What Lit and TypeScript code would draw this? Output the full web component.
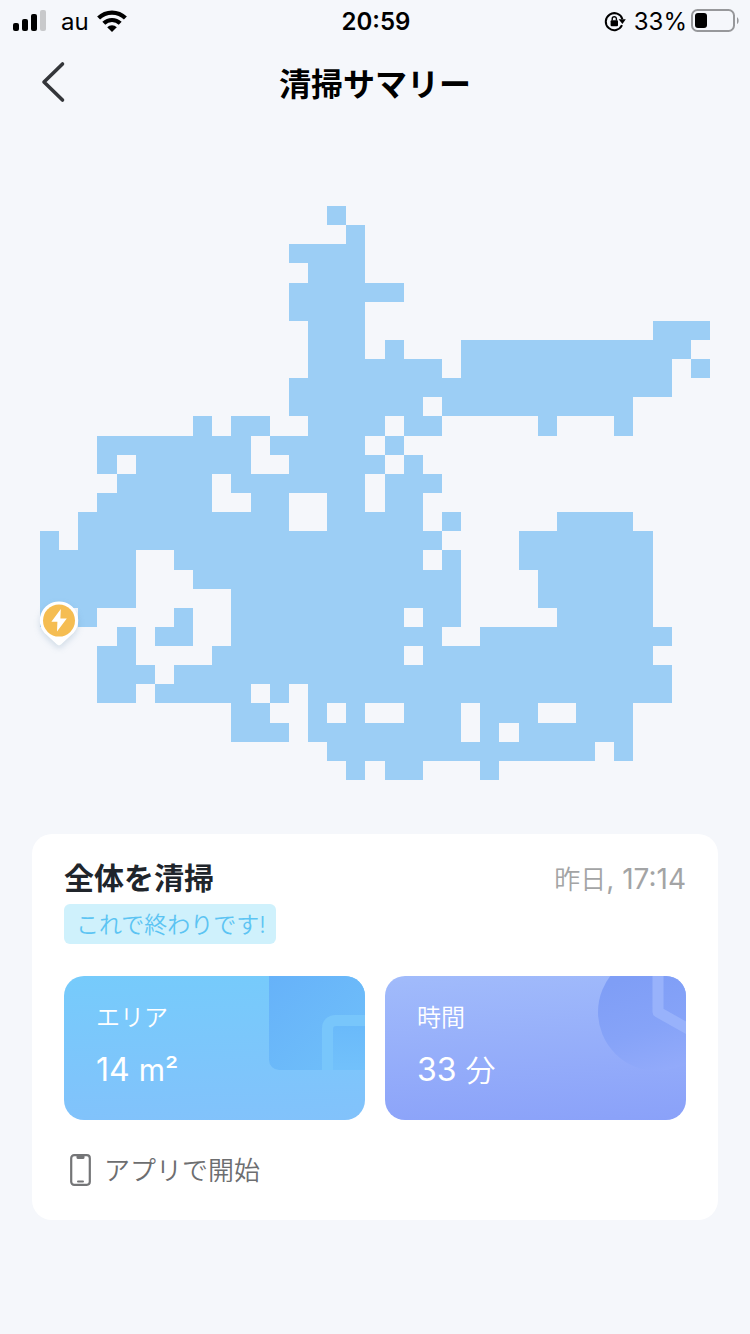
import { LitElement, html, css, svg } from "lit";
import { customElement, property } from "lit/decorators.js";

type Span = [number, number];

const COLS = 35;
const CELL_W = 670 / 35;
const CELL_H = 574 / 30;

/* Cleaned cells of each map row, as [first column, column after the last]. */
const CLEANED: Span[][] = [
  [[15, 16]],
  [[16, 17]],
  [[13, 17]],
  [[14, 17]],
  [[13, 19]],
  [[13, 17]],
  [[14, 17], [32, 35]],
  [[14, 17], [18, 19], [22, 34]],
  [[14, 21], [22, 33], [34, 35]],
  [[13, 33]],
  [[13, 20], [21, 31]],
  [[8, 9], [10, 12], [14, 18], [19, 21], [26, 27], [30, 31]],
  [[3, 11], [12, 17], [18, 19]],
  [[3, 4], [5, 11], [13, 18], [19, 20]],
  [[4, 9], [10, 17], [18, 21]],
  [[3, 9], [11, 13], [15, 17], [18, 20]],
  [[2, 13], [15, 20], [21, 22], [27, 31]],
  [[0, 1], [2, 21], [25, 32]],
  [[0, 5], [7, 20], [21, 22], [25, 32]],
  [[0, 5], [8, 22], [26, 32]],
  [[0, 5], [10, 22], [26, 32]],
  [[0, 1], [2, 3], [7, 8], [10, 19], [20, 22], [27, 32]],
  [[4, 5], [6, 8], [10, 21], [23, 33]],
  [[3, 5], [9, 19], [20, 32]],
  [[3, 6], [7, 33]],
  [[3, 5], [6, 11], [12, 13], [14, 33]],
  [[10, 12], [14, 15], [16, 17], [19, 22], [23, 26], [28, 31]],
  [[10, 13], [14, 22], [23, 24], [25, 31]],
  [[15, 29], [30, 31]],
  [[16, 17], [18, 20], [23, 24]],
];

@customElement("status-bar")
export class StatusBar extends LitElement {
  static styles = css`
    :host {
      display: grid;
      grid-template-columns: 1fr auto 1fr;
      align-items: center;
      height: 40px;
      padding: 0 10px 0 12px;
      font-size: 24px;
      line-height: 40px;
      color: #000;
    }
    .side {
      display: flex;
      align-items: center;
    }
    .right {
      justify-content: flex-end;
    }
    .text {
      padding-top: 2px;
    }
    .time {
      font-weight: 600;
    }
    .carrier {
      margin: 0 8px 0 15px;
    }
    .percent {
      margin: 0 3px 0 8px;
    }
    svg {
      display: block;
      flex: none;
    }
  `;

  render() {
    return html`
      <div class="side">
        <svg width="34" height="22" viewBox="0 0 34 22" aria-hidden="true">
          <rect x="1" y="13" width="6" height="8" rx="2" />
          <rect x="10" y="9" width="6" height="12" rx="2" />
          <rect x="19" y="4" width="6" height="17" rx="2" />
          <rect x="28" y="0" width="6" height="21" rx="2" fill="#c8c9cb" />
        </svg>
        <span class="text carrier">au</span>
        <svg width="30" height="22" viewBox="0 0 30 22" aria-hidden="true">
          <g fill="none" stroke="#000" stroke-width="4.2">
            <path d="M1.6 8.1A19.2 19.2 0 0 1 28.4 8.1" />
            <path d="M6.8 13.3A11.8 11.8 0 0 1 23.2 13.3" />
          </g>
          <path d="M15 22 10.2 17.2A6.8 6.8 0 0 1 19.8 17.2Z" />
        </svg>
      </div>
      <span class="text time">20:59</span>
      <div class="side right">
        <svg width="22" height="22" viewBox="0 0 22 22" aria-hidden="true">
          <path d="M18 15.200A8.500 8.500 0 1 1 18.400 9.200" fill="none" stroke="#000" stroke-width="2" />
          <path d="M14.600 9.200H21.800L18.400 14Z" />
          <rect x="6.600" y="10.200" width="7.400" height="6" rx="1" />
          <path d="M8.200 10.600V8.800a2.100 2.100 0 0 1 4.200 0v1.800" fill="none" stroke="#000" stroke-width="1.4" />
        </svg>
        <span class="text percent">33%</span>
        <svg width="50" height="24" viewBox="0 0 50 24" aria-hidden="true">
          <rect x="2" y="1" width="42" height="21" rx="5.5" fill="none" stroke="#97989b" stroke-width="2" />
          <rect x="5" y="4" width="12" height="15" rx="3" />
          <path d="M47 8.2c2.2 1.2 2.2 5.6 0 6.8Z" fill="#97989b" />
        </svg>
      </div>
    `;
  }
}

@customElement("cleaning-map")
export class CleaningMap extends LitElement {
  static styles = css`
    :host {
      display: block;
    }
    .map {
      display: block;
      width: 100%;
      height: auto;
      overflow: visible;
    }
    .cells {
      fill: #9ccef5;
      shape-rendering: crispEdges;
    }
    .pin {
      filter: drop-shadow(0 3px 3px rgba(60, 110, 150, 0.2));
    }
  `;

  render() {
    const edge = (n: number, size: number) => Math.round(n * size);
    const d = CLEANED.map((spans, row) =>
      spans
        .map(([from, to]) => {
          const x0 = edge(from, CELL_W);
          const x1 = edge(to, CELL_W);
          const y0 = edge(row, CELL_H);
          const y1 = edge(row + 1, CELL_H);
          return `M${x0} ${y0}H${x1}V${y1}H${x0}Z`;
        })
        .join("")
    ).join("");
    const width = edge(COLS, CELL_W);
    const height = edge(CLEANED.length, CELL_H);
    return html`
      <svg class="map" viewBox="0 0 ${width} ${height}" role="img" aria-label="清掃マップ">
        <path class="cells" d=${d}></path>
        ${svg`
          <g class="pin">
            <path fill="#fff" d="M19 395.400A19 19 0 0 1 31.800 428.600L21 438.600Q19 440.200 17 438.600L6.200 428.600A19 19 0 0 1 19 395.400Z"/>
          </g>
          <circle cx="19" cy="414.600" r="16" fill="#f5bd52"/>
          <path fill="#fff" d="M20.800 403 11.400 415.800H17.400L17 425.400 26.800 412.400H20.400Z"/>
        `}
      </svg>
    `;
  }
}

@customElement("stat-tile")
export class StatTile extends LitElement {
  @property() label = "";
  @property() value = "";
  @property() unit = "";
  @property({ reflect: true }) kind = "area";

  static styles = css`
    :host {
      display: flex;
      flex-direction: column;
      justify-content: center;
      gap: 12px;
      box-sizing: border-box;
      height: 144px;
      padding: 0 32px;
      position: relative;
      overflow: hidden;
      border-radius: 20px;
      color: #fff;
      background: linear-gradient(178deg, #76cbfb, #82c2fb);
    }
    :host([kind="time"]) {
      background: linear-gradient(176deg, #a1bbfb, #8aa1f9);
    }
    .art {
      position: absolute;
      top: 0;
      right: 0;
    }
    .label {
      font-size: 24px;
      line-height: 32px;
      font-weight: 350;
    }
    .value {
      font-size: 32px;
      line-height: 48px;
    }
    .unit {
      font-size: 30px;
    }
    :host([kind="time"]) .unit {
      font-weight: 350;
    }
    .label,
    .value {
      position: relative;
    }
  `;

  private areaArt() {
    return html`
      <svg class="art" width="96" height="96" viewBox="0 0 96 96" aria-hidden="true">
        <defs>
          <linearGradient id="sq" x1="0" y1="0" x2="1" y2="1">
            <stop offset="0" stop-color="#66b2f9" />
            <stop offset="1" stop-color="#70c0fa" />
          </linearGradient>
          <linearGradient id="in" x1="0" y1="0" x2="0" y2="1">
            <stop offset="0" stop-color="#6abafa" />
            <stop offset="1" stop-color="#72c1fb" />
          </linearGradient>
        </defs>
        <path d="M0 0H96V94H10A10 10 0 0 1 0 84Z" fill="url(#sq)" />
        <path d="M53 94V52A13 13 0 0 1 66 39H96V94Z" fill="#78c6fb" />
        <path d="M64 94V53A3 3 0 0 1 67 50H96V94Z" fill="url(#in)" />
      </svg>
    `;
  }

  private timeArt() {
    return html`
      <svg class="art" width="88" height="96" viewBox="0 0 88 96" aria-hidden="true">
        <defs>
          <linearGradient id="disc" x1="0.3" y1="0.2" x2="0.55" y2="1">
            <stop offset="0" stop-color="#7f9ef6" />
            <stop offset="0.55" stop-color="#86a3f8" />
            <stop offset="1" stop-color="#92aafa" />
          </linearGradient>
        </defs>
        <circle cx="59" cy="36" r="59" fill="url(#disc)" />
        <path d="M60 -10V36L92 54" fill="none" stroke="#98b2fb" stroke-width="11" stroke-linejoin="round" />
      </svg>
    `;
  }

  render() {
    return html`
      ${this.kind === "time" ? this.timeArt() : this.areaArt()}
      <span class="label">${this.label}</span>
      <span class="value">${this.value} <span class="unit">${this.unit}</span></span>
    `;
  }
}

@customElement("app-root")
export class AppRoot extends LitElement {
  static styles = css`
    :host {
      display: block;
      min-height: 100vh;
      box-sizing: border-box;
      background: #f5f7fb;
      font-family: "Inter", "Noto Sans CJK JP", sans-serif;
    }
    .nav {
      display: grid;
      grid-template-columns: 72px 1fr 72px;
      align-items: center;
      height: 90px;
    }
    .back {
      display: flex;
      justify-content: flex-end;
      padding: 0 6px 6px 0;
      border: 0;
      background: none;
    }
    .title {
      margin: 0;
      text-align: center;
      font-size: 32px;
      line-height: 48px;
      font-weight: 700;
      color: #000;
    }
    .map {
      padding: 76px 40px 54px;
    }
    .card {
      margin: 0 32px;
      padding: 24px 32px 30px;
      border-radius: 20px;
      background: #fff;
    }
    .head {
      display: flex;
      justify-content: space-between;
      align-items: center;
      height: 40px;
      line-height: 40px;
    }
    .mode {
      margin: 0;
      font-size: 30px;
      font-weight: 700;
      color: #20252b;
    }
    .date {
      padding-top: 2px;
      font-size: 26px;
      font-weight: 350;
      color: #a3a4a5;
    }
    .clock {
      font-size: 28px;
      font-weight: 400;
    }
    .tag {
      display: inline-block;
      box-sizing: border-box;
      height: 40px;
      margin-top: 6px;
      padding: 0 10px 0 12px;
      border-radius: 6px;
      background: #cff1fc;
      color: #5cc4f3;
      font-size: 23px;
      line-height: 42px;
      font-weight: 350;
      vertical-align: top;
    }
    .stats {
      display: grid;
      grid-template-columns: 1fr 1fr;
      gap: 20px;
      margin-top: 32px;
    }
    .origin {
      display: flex;
      align-items: center;
      gap: 13px;
      height: 40px;
      margin-top: 30px;
      padding-left: 6px;
      font-size: 26px;
      line-height: 40px;
      font-weight: 350;
      color: #6d6e70;
    }
    .source {
      padding-top: 2px;
    }
  `;

  render() {
    return html`
      <status-bar></status-bar>
      <header class="nav">
        <button class="back" aria-label="戻る">
          <svg width="26" height="42" viewBox="0 0 26 42" aria-hidden="true">
            <path d="M22.500 3 4 21 22.500 39" fill="none" stroke="#34363a" stroke-width="3.600" stroke-linecap="round" stroke-linejoin="round" />
          </svg>
        </button>
        <h1 class="title">清掃サマリー</h1>
      </header>
      <main>
        <div class="map"><cleaning-map></cleaning-map></div>
        <section class="card">
          <div class="head">
            <h2 class="mode">全体を清掃</h2>
            <time class="date">昨日<span class="clock">, 17:14</span></time>
          </div>
          <span class="tag">これで終わりです!</span>
          <div class="stats">
            <stat-tile kind="area" label="エリア" value="14" unit="m²"></stat-tile>
            <stat-tile kind="time" label="時間" value="33" unit="分"></stat-tile>
          </div>
          <div class="origin">
            <svg width="21" height="32" viewBox="0 0 21 32" aria-hidden="true">
              <rect x="1.200" y="1.200" width="18.600" height="29.600" rx="3" fill="none" stroke="#747577" stroke-width="2.200" />
              <path d="M6.500 2H14.500V3.500Q14.500 5 13 5H8Q6.500 5 6.500 3.500Z" fill="#747577" />
              <rect x="7" y="26.500" width="7" height="2" rx="1" fill="#747577" />
            </svg>
            <span class="source">アプリで開始</span>
          </div>
        </section>
      </main>
    `;
  }
}
